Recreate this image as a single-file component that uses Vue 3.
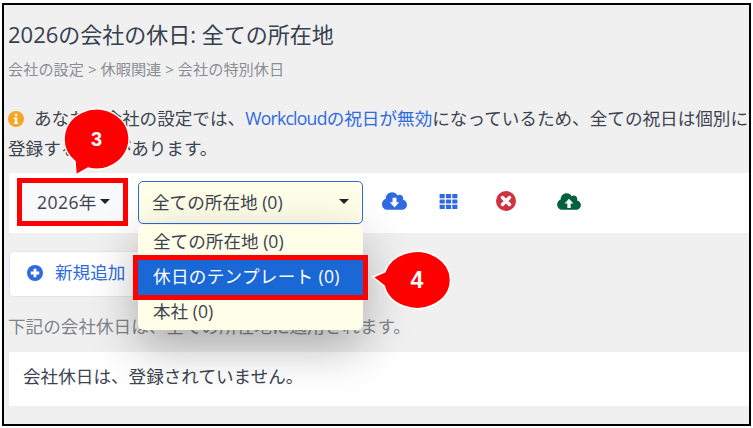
<script setup>
const items = ['全ての所在地 (0)', '休日のテンプレート (0)', '本社 (0)']
</script>

<template>
  <div class="frame">
    <h1 class="title">2026の会社の休日: 全ての所在地</h1>
    <div class="crumbs">会社の設定 &gt; 休暇関連 &gt; 会社の特別休日</div>
    <div class="notice">
      <div class="line">
        <svg class="info" viewBox="0 0 16 16"><circle cx="8" cy="8" r="8" fill="#f5a623" /><rect x="6.9" y="2.8" width="2.4" height="2.4" rx=".6" fill="#fff" /><path d="M5.9 6.4h3.3v5.2h1v1.5H5.9v-1.5h1V7.900h-1z" fill="#fff" /></svg>
        <span>あなたの会社の設定では、<a class="link"><span class="wc">Workcloud</span>の祝日が無効</a>になっているため、全ての祝日は個別に設定して</span>
      </div>
      <div class="line">登録する必要があります。</div>
    </div>

    <div class="toolbar">
      <button class="year"><span>2026年</span><i class="caret"></i></button>
      <div class="select-wrap">
        <button class="select"><span>全ての所在地 (0)</span><i class="caret"></i></button>
        <ul class="menu">
          <li v-for="(it, i) in items" :key="it" :class="{ active: i === 1 }">{{ it }}</li>
        </ul>
      </div>
      <div class="tools">
        <svg class="ic dl" viewBox="0 0 640 512"><path fill="#2f6ae0" d="M537.600 226.600c4.100-10.700 6.400-22.400 6.400-34.600 0-53-43-96-96-96-19.700 0-38.100 6-53.300 16.200C367 64.200 315.300 32 256 32c-88.400 0-160 71.600-160 160 0 2.700.1 5.400.2 8.100C40.200 219.800 0 273.200 0 336c0 79.500 64.500 144 144 144h368c70.700 0 128-57.300 128-128 0-61.900-44-113.600-102.400-125.400z" /><path fill="#fff" d="M270 170h100v120h70L320 420 200 290h70z" /></svg>
        <svg class="ic grid" viewBox="0 0 19 16"><g fill="#2f6ae0"><rect x="0" y="0" width="5.500" height="4.500" rx=".6" /><rect x="6.750" y="0" width="5.500" height="4.500" rx=".6" /><rect x="13.500" y="0" width="5.500" height="4.500" rx=".6" /><rect x="0" y="5.750" width="5.500" height="4.500" rx=".6" /><rect x="6.750" y="5.750" width="5.500" height="4.500" rx=".6" /><rect x="13.500" y="5.750" width="5.500" height="4.500" rx=".6" /><rect x="0" y="11.500" width="5.500" height="4.500" rx=".6" /><rect x="6.750" y="11.500" width="5.500" height="4.500" rx=".6" /><rect x="13.500" y="11.500" width="5.500" height="4.500" rx=".6" /></g></svg>
        <svg class="ic cross" viewBox="0 0 20 20"><circle cx="10" cy="10" r="10" fill="#cf3340" /><path d="M6.500 6.500l7 7M13.500 6.500l-7 7" stroke="#fff" stroke-width="3.400" stroke-linecap="round" /></svg>
        <svg class="ic ul" viewBox="0 0 640 512"><path fill="#03613f" d="M537.600 226.600c4.100-10.700 6.400-22.400 6.400-34.600 0-53-43-96-96-96-19.700 0-38.100 6-53.300 16.200C367 64.200 315.300 32 256 32c-88.400 0-160 71.600-160 160 0 2.700.1 5.400.2 8.100C40.200 219.800 0 273.200 0 336c0 79.500 64.500 144 144 144h368c70.700 0 128-57.300 128-128 0-61.900-44-113.600-102.400-125.400z" /><path fill="#fff" d="M275 430h90V310h75L320 180 200 310h75z" /></svg>
      </div>
    </div>

    <div class="add-card">
      <svg class="plus" viewBox="0 0 16 16"><circle cx="8" cy="8" r="8" fill="#2f6ae0" /><path d="M8 3.800v8.400M3.800 8h8.400" stroke="#fff" stroke-width="2.800" /></svg>
      <span class="link add-label">新規追加</span>
    </div>

    <p class="desc">下記の会社休日は、全ての所在地に適用されます。</p>
    <div class="empty">会社休日は、登録されていません。</div>

    <div class="callout c3">
      <svg viewBox="0 0 73 75"><path d="M28 63A32.500 30 0 1 0 15 56.500L16 70Z" fill="#f00" stroke="#fff" stroke-width="1.500" /></svg>
      <b>3</b>
    </div>
    <div class="callout c4">
      <svg viewBox="0 0 84 62"><path d="M14.800 22A33.500 28.500 0 1 1 14.200 36L3 27Z" fill="#f00" stroke="#fff" stroke-width="1.500" /></svg>
      <b>4</b>
    </div>
  </div>
</template>

<style>
html, body { margin: 0; background: #fff; }
</style>

<style scoped>
.frame {
  position: relative;
  box-sizing: border-box;
  width: 749px;
  height: 423px;
  margin: 3px 0 0 2px;
  padding: 0 0 0 4px;
  border: 2px solid #000;
  background: #f0f0f0;
  overflow: hidden;
  font-family: "Open Sans", "Noto Sans CJK JP", sans-serif;
  font-size: 17.600px;
  color: #3c4450;
}
.title {
  margin: 14px 0 0;
  font-size: 22px;
  line-height: 30px;
  font-weight: 400;
  color: #36404f;
}
.crumbs {
  margin-top: 10px;
  font-size: 15.200px;
  line-height: 20px;
  color: #8a8f94;
}
.notice { margin-top: 24px; line-height: 30px; }
.line { white-space: nowrap; }
.info { width: 16px; height: 16px; margin-right: 10px; vertical-align: -2px; }
.link { color: #2f6ae0; }
.wc { letter-spacing: -.75px; }
.toolbar {
  display: flex;
  align-items: center;
  box-sizing: border-box;
  height: 60px;
  margin-top: 10px;
  margin-left: 1px;
  padding: 0 0 2px 8px;
  background: #fff;
}
.year {
  display: flex;
  align-items: center;
  box-sizing: border-box;
  width: 111px;
  height: 48px;
  padding: 0 0 2px 15px;
  border: 5px solid #f00;
  background: #f8f9fa;
  font: inherit;
  letter-spacing: .4px;
  color: #3c4450;
}
.caret {
  display: block;
  width: 0;
  height: 0;
  border-top: 5px solid #222;
  border-left: 5px solid transparent;
  border-right: 5px solid transparent;
}
.year .caret { margin-left: 3px; }
.select-wrap { position: relative; margin: 1px 0 0 10px; }
.select {
  display: flex;
  align-items: center;
  justify-content: space-between;
  box-sizing: border-box;
  width: 225px;
  height: 43px;
  padding: 0 13px 3px 13px;
  border: 1px solid #2f6ae0;
  border-radius: 5px;
  background: #fffee9;
  font: inherit;
  color: #3c4450;
}
.menu {
  position: absolute;
  z-index: 2;
  top: 44px;
  left: 0;
  width: 225px;
  margin: 0;
  padding: 0;
  list-style: none;
  background: #fffee9;
  border-radius: 6px;
  box-shadow: 0 16px 48px rgba(0, 0, 0, .3);
}
.menu li {
  height: 35px;
  padding-left: 15px;
  line-height: 32px;
}
.menu li.active {
  background: #1a68d6;
  color: #fff;
  letter-spacing: .3px;
  outline: 5px solid #f00;
}
.tools { position: relative; display: flex; align-items: center; margin: 0 0 2px 19px; }
.ic { display: block; }
.dl { width: 25px; height: 20px; }
.grid { width: 19px; height: 15px; margin-left: 32px; }
.cross { width: 20px; height: 20px; margin-left: 38px; }
.ul { width: 24px; height: 19px; margin-left: 41px; }
.add-card {
  display: flex;
  align-items: center;
  box-sizing: border-box;
  width: 180px;
  height: 46px;
  margin: 18px 0 0 1px;
  padding: 0 0 2px 17px;
  border: 1px solid #dfe6f5;
  border-radius: 4px;
  background: #fff;
}
.plus { width: 16px; height: 16px; margin-right: 12px; }
.add-label { margin-bottom: 4px; }
.desc { margin: 17px 0 0; line-height: 24px; color: #80858a; }
.empty {
  height: 54px;
  margin: 14px 0 0 1px;
  padding-left: 14px;
  line-height: 48px;
  background: #fff;
}
.callout { position: absolute; z-index: 3; }
.callout svg { display: block; width: 100%; height: 100%; }
.callout b {
  position: absolute;
  color: #fff;
  font-family: "Liberation Sans", sans-serif;
  line-height: 26px;
  text-align: center;
}
.c3 { left: 56px; top: 100px; width: 73px; height: 75px; }
.c3 b { left: 0; top: 21px; width: 73px; font-size: 20px; }
.c4 { left: 366px; top: 245px; width: 84px; height: 62px; }
.c4 b { left: 27px; top: 17px; width: 40px; font-size: 23px; }
</style>
